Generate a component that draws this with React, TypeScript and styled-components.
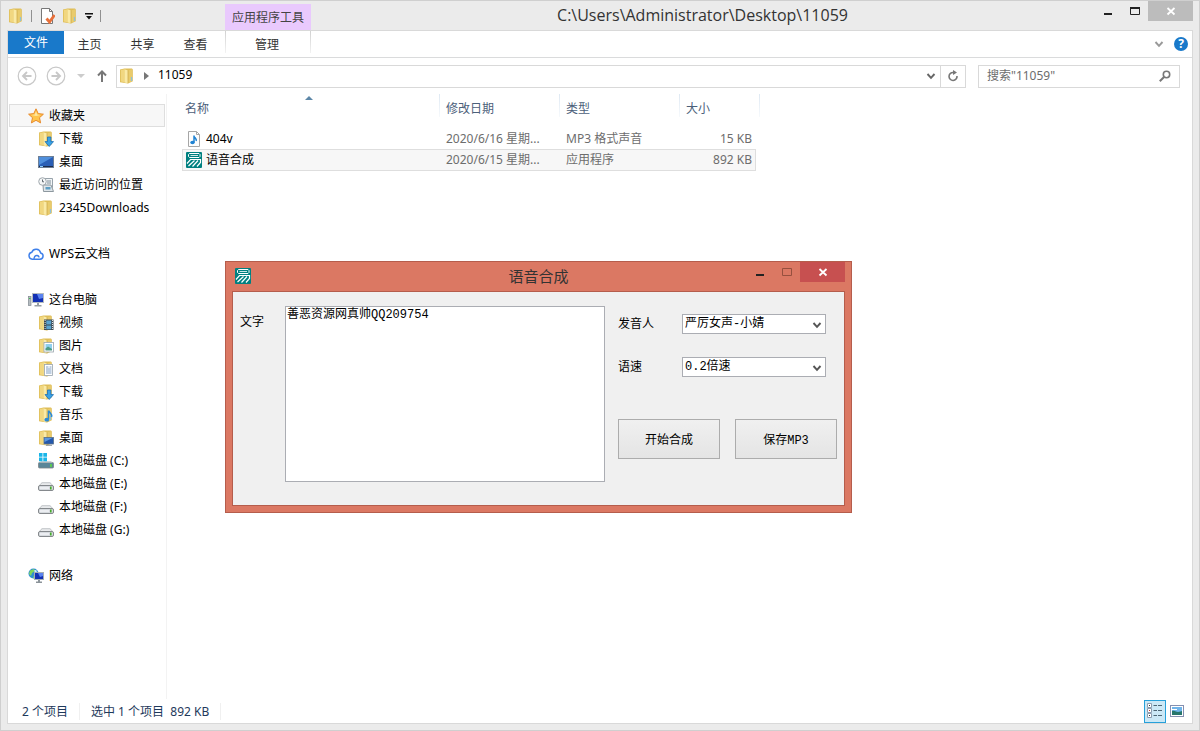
import React from 'react';
import styled, { createGlobalStyle, css } from 'styled-components';

const GlobalStyle = createGlobalStyle`
  *, *::before, *::after { box-sizing: border-box; }
  body { margin: 0; background: #ebebeb; }
  body, button, input, select, textarea {
    font-family: "Noto Sans", "Noto Sans CJK SC", sans-serif;
    font-size: 12px;
    line-height: 16px;
    color: #000;
  }
  button { padding: 0; border: 0; background: none; }
  a { color: inherit; text-decoration: none; }
  svg { display: block; flex: none; }
`;

/* ---------- icons ---------- */

type IconProps = { size?: number; children?: React.ReactNode };

const Svg = ({ size = 16, children }: IconProps) => (
  <svg width={size} height={size} viewBox="0 0 16 16" fill="none" aria-hidden="true">
    {children}
  </svg>
);

const FolderShape = () => (
  <>
    <path d="M1 1.500 5.500.5h7.500l.8 1v11.800L9 15.600 1 14.200Z" fill="#dfbe58" />
    <path d="M1.800 2 5.500 1.200v13L1.800 13.600Z" fill="#f1d780" />
    <path d="M5.500 1.200 9 2.400v12.800l-3.500-.8Z" fill="#faeaa6" />
    <path d="M9 2.400 13 1.300v11.800l-4 2Z" fill="#e9cb6c" />
    <path d="M9 2.400v12.800" stroke="#c9a343" strokeWidth=".7" />
    <path d="M12.500 9v4" stroke="#8cc1de" strokeWidth="1.200" />
  </>
);

const FolderIcon = () => <Svg><FolderShape /></Svg>;

const DownloadIcon = () => (
  <Svg>
    <FolderShape />
    <path d="M9.500 6h3.400v4.600h2.600L11.200 15.500 7 10.600h2.500Z" fill="#39a2e6" stroke="#1b6fb4" strokeWidth=".8" />
  </Svg>
);

const MonitorIcon = () => (
  <Svg>
    <rect x=".5" y="2.500" width="15" height="11" fill="#2a5fb6" stroke="#6d7f96" />
    <path d="M1 3h14L1 11Z" fill="#4f8fdc" />
    <path d="M1 12.500h14" stroke="#1d2c4c" />
    <path d="M2 12.500h3" stroke="#8fd0ff" />
  </Svg>
);

const RecentIcon = () => (
  <Svg>
    <path d="M7 1.500h7.500v9H7Z" fill="#f2f5f7" stroke="#98a3ab" />
    <path d="M9 4h4M9 6h4" stroke="#7c8b96" />
    <path d="M5 8h8l2.500 6.500h-10Z" fill="#dfe5e9" stroke="#8d989f" />
    <path d="M7.500 10h5v2.500h-5Z" fill="#5e9fc4" />
    <circle cx="4.500" cy="4.500" r="3.800" fill="#f4f6f7" stroke="#a0a8ad" />
    <path d="M4.500 2.500v2.300H6" stroke="#5c666d" />
  </Svg>
);

const StarIcon = () => (
  <Svg>
    <path d="m8 .8 2.200 4.800 5.200.6-3.900 3.500 1.100 5.200L8 12.300l-4.600 2.600 1.100-5.200L.6 6.200l5.200-.6Z" fill="#ffc54b" stroke="#e88a2c" />
    <path d="m8 3.200 1.200 3.300 3.300.5-4.500 1-4.500-1 3.300-.5Z" fill="#ffe7a0" />
  </Svg>
);

const CloudIcon = () => (
  <Svg>
    <path d="M4.200 13.200h7.800a3.200 3.200 0 0 0 .6-6.300A4.600 4.600 0 0 0 3.800 6.300 3.500 3.500 0 0 0 4.200 13.200Z" stroke="#3f80ea" strokeWidth="1.500" />
    <path d="M6 13c.2-2.500 1.200-3.600 3-3.500 1.500.1 2 1 2 2" stroke="#3f80ea" strokeWidth="1.300" />
  </Svg>
);

const ComputerIcon = () => (
  <Svg>
    <rect x=".5" y="4.500" width="2.500" height="9" fill="#b5bcc1" stroke="#7e878d" strokeWidth=".7" />
    <path d="M1 6.500h1.500" stroke="#3fc04d" />
    <rect x="4.500" y="1.500" width="11" height="9" fill="#1230b4" stroke="#b4bbc0" />
    <path d="M9 2h6v4l-4 1Z" fill="#5a83f0" />
    <path d="M9 11h2v2H9ZM6.500 13h7v1.500h-7Z" fill="#989fa4" />
  </Svg>
);

const VideoIcon = () => (
  <Svg>
    <FolderShape />
    <rect x="6" y="4.500" width="9.500" height="10.500" fill="#3d4850" />
    <path d="M8.300 5.500h5v4h-5ZM8.300 10.500h5v3.700h-5Z" fill="#5ba3d0" />
    <path d="M7.100 5v9.500M14.500 5v9.500" stroke="#dfe4e8" strokeDasharray="1 1" />
  </Svg>
);

const PictureIcon = () => (
  <Svg>
    <FolderShape />
    <rect x="6" y="4.500" width="9.500" height="9.500" fill="#fff" stroke="#9aa5ad" strokeWidth=".8" />
    <path d="M7.500 6h6.500v6H7.500Z" fill="#8fd0ee" />
    <path d="M7.500 10.500 10 8.500l4 2.500v1.500H7.500Z" fill="#4f9c86" />
  </Svg>
);

const DocumentIcon = () => (
  <Svg>
    <FolderShape />
    <rect x="6.500" y="3.500" width="8" height="11" fill="#fff" stroke="#9aa5ad" strokeWidth=".8" />
    <path d="M8 6h2.500M11.500 6H13.500M8 8h5.500M8 10h5.500M8 12h5.500" stroke="#7f9ec4" />
  </Svg>
);

const MusicFolderIcon = () => (
  <Svg>
    <FolderShape />
    <path d="M10.500 4v8" stroke="#2b8ad6" strokeWidth="1.500" />
    <path d="M10.500 3.500c.5 2.200 4 3 3 6.500" stroke="#2b8ad6" strokeWidth="1.600" />
    <ellipse cx="8.800" cy="12.700" rx="2.400" ry="1.900" fill="#2b8ad6" />
  </Svg>
);

const DesktopFolderIcon = () => (
  <Svg>
    <FolderShape />
    <rect x="6" y="7.500" width="9.500" height="6.500" fill="#2458ac" stroke="#5c7288" strokeWidth=".8" />
    <path d="M6.500 8h8l-8 4Z" fill="#5c98df" />
    <path d="M8 15.300h6" stroke="#8c949a" />
  </Svg>
);

const DriveIcon = () => (
  <Svg>
    <path d="m3 7.500 1-.8h8l1 .8 2.300 3H.7Z" fill="#e9ebed" stroke="#b3b7ba" strokeWidth=".8" />
    <rect x=".5" y="9.500" width="15" height="5" rx="1.500" fill="#d6dade" stroke="#85898d" />
    <path d="M2 11h9v2H2Z" fill="#eceef2" />
    <path d="M12.800 10.500v3" stroke="#46ad2c" strokeWidth="1.600" />
  </Svg>
);

const SystemDriveIcon = () => (
  <Svg>
    <rect x=".5" y="9.500" width="15" height="5.500" rx="1" fill="#5a8698" stroke="#7d8387" strokeWidth=".8" />
    <path d="m2 9 1-1h10l1.500 1.500H1Z" fill="#ccd2d5" />
    <path d="M13 11v3" stroke="#5ee03a" strokeWidth="1.500" />
    <path d="M1 0h3.500v3.700H1ZM5.300 0H9v3.700H5.300ZM1 4.500h3.500v3.700H1ZM5.300 4.500H9v3.700H5.300Z" fill="#19b5e8" />
  </Svg>
);

const NetworkIcon = () => (
  <Svg>
    <circle cx="5.500" cy="5.500" r="5" fill="#2f8fd4" />
    <path d="M2 2.500 6 1l1 2-3 2-1 3-2-2ZM6 7l3 1-2 2.300H5Z" fill="#7fd65c" />
    <path d="M6 2.500 8 2l1 1.500-2 1Z" fill="#d6f0fb" />
    <rect x="6.500" y="4.500" width="9" height="7" fill="#1230b4" stroke="#a5adb4" />
    <path d="M10 5h5v3l-3 1Z" fill="#5a83f0" />
    <path d="M10 12h2v1.500h-2ZM8 13.500h6V15H8Z" fill="#8b9399" />
  </Svg>
);

const MusicFileIcon = () => (
  <Svg>
    <path d="M2.500.5h8l3 3v12h-11Z" fill="#fdfdfd" stroke="#a6a6a6" />
    <path d="M10.500.5v3h3" stroke="#a6a6a6" />
    <path d="M8 4.500v7M8 5c.3 2 3 2.200 2.200 5" stroke="#1f82d2" strokeWidth="1.500" />
    <ellipse cx="6.500" cy="11.500" rx="2.200" ry="1.800" fill="#1f82d2" />
  </Svg>
);

const ELangIcon = () => (
  <Svg>
    <rect width="16" height="16" rx="1" fill="#008080" />
    <path d="M2.500 2.500 3.500 1.500h9.500l1 1v2l-1 1H3.500l-1-1Z" stroke="#fff" />
    <path d="M4.500 3.500H12" stroke="#fff" strokeWidth=".8" />
    <path d="M1 11.500 4.500 7.500h10v3L11 14.500M8.500 8.500 2.500 14M12 8.500 6.500 14.500" stroke="#fff" strokeWidth="1.200" />
  </Svg>
);

const CheckedPageIcon = () => (
  <Svg>
    <path d="M2.500.5h8l3 3v12h-11Z" fill="#fff" stroke="#777" />
    <path d="M10.500.5v3h3" stroke="#777" />
    <path d="m7.500 10.500 3 3.500L15.500 7" stroke="#e8703a" strokeWidth="2.800" />
  </Svg>
);

const DetailsIcon = () => (
  <Svg>
    <path d="M.5.5h4v4h-4ZM.5 5.500h4v4h-4ZM.5 10.500h4v4h-4Z" fill="#fff" stroke="#8d9db0" />
    <path d="M2 2.500h1M2 12.500h1" stroke="#333" />
    <path d="M2 7.500h1" stroke="#d0392b" />
    <path d="M6.500 2.500H10M11 2.500h4M6.500 7.500H10M11 7.500h4M6.500 12.500H10M11 12.500h4" stroke="#4d6675" />
  </Svg>
);

const LargeIconsIcon = () => (
  <Svg>
    <rect x="1.500" y="2.500" width="13" height="11" fill="#fff" stroke="#8590b0" />
    <path d="M3 4h10v8H3Z" fill="#6fb4ea" />
    <path d="M3 8c3-1 4 1 6 1s3-1 4-1v4H3Z" fill="#27766c" />
    <path d="M3 6.500h5" stroke="#fff" />
  </Svg>
);

const Chevron = ({ color = '#555' }: { color?: string }) => (
  <svg width="10" height="10" viewBox="0 0 10 10" fill="none" aria-hidden="true">
    <path d="m1.500 3 3.500 3.800L8.500 3" stroke={color} strokeWidth="1.900" />
  </svg>
);

const NavArrow = ({ flipped = false }: { flipped?: boolean }) => (
  <svg width="20" height="20" viewBox="0 0 20 20" fill="none" stroke="#c8c8c8" aria-hidden="true">
    <circle cx="10" cy="10" r="8.800" strokeWidth="1.200" />
    <path d={flipped ? 'M5.500 10h8M10 6l4 4-4 4' : 'M14.500 10h-8M10 6l-4 4 4 4'} strokeWidth="1.900" />
  </svg>
);

/* ---------- explorer window ---------- */

const Window = styled.div`
  position: relative;
  display: flex;
  flex-direction: column;
  min-height: 100vh;
  border: 1px solid #cfcfcf;
  background: #ebebeb;
`;

const TitleBar = styled.header`
  display: flex;
  height: 29px;
  padding: 0 6px 0 7px;
`;

const QuickAccess = styled.div`
  display: flex;
  align-items: center;
  gap: 7px;
  width: 217px;
  flex: none;
`;

const QuickSeparator = styled.span`
  width: 1px;
  height: 12px;
  background: #909090;
`;

const ContextHeader = styled.div`
  align-self: flex-end;
  flex: none;
  width: 86px;
  height: 26px;
  background: #e9c9fd;
  color: #444;
  line-height: 28px;
  text-align: center;
`;

const WindowTitle = styled.h1`
  flex: 1;
  margin: 0;
  font-family: "Open Sans", "Noto Sans", sans-serif;
  font-size: 16px;
  font-weight: 400;
  line-height: 28px;
  text-align: center;
  color: #333;
`;

const WindowControls = styled.div`
  display: flex;
  align-items: flex-start;
  flex: none;
`;

const WindowButton = styled.button<{ $close?: string }>`
  display: grid;
  place-items: center;
  width: ${p => (p.$close ? 45 : 27)}px;
  height: 20px;
  background: ${p => p.$close ?? 'transparent'};
`;

const MinimizeGlyph = () => (
  <svg width="10" height="10" viewBox="0 0 10 10" aria-hidden="true"><path d="M1 7h8v2H1Z" fill="#222" /></svg>
);
const MaximizeGlyph = ({ color = '#222' }: { color?: string }) => (
  <svg width="10" height="10" viewBox="0 0 10 10" fill="none" aria-hidden="true">
    <path d="M.5 1.500h9v7h-9Z" stroke={color} />
    {color === '#222' && <path d="M0 2h10" stroke={color} strokeWidth="2" />}
  </svg>
);
const CloseGlyph = () => (
  <svg width="10" height="10" viewBox="0 0 10 10" aria-hidden="true"><path d="m1.500 2 7 6.500M8.500 2l-7 6.500" stroke="#fff" strokeWidth="1.800" /></svg>
);

const Frame = styled.div`
  flex: 1;
  display: flex;
  flex-direction: column;
  margin: 0 6px 6px;
  border: 1px solid #d9d9d9;
  background: #fff;
`;

const Ribbon = styled.nav`
  display: flex;
  height: 27px;
  border-bottom: 1px solid #dadbdc;
`;

const FileTab = styled.button`
  width: 56px;
  height: 23px;
  background: #1979ca;
  color: #fff;
`;

const Tabs = styled.div`
  display: flex;
  width: 161px;
  flex: none;
`;

const Tab = styled.button<{ $contextual?: boolean }>`
  flex: none;
  width: 53px;
  height: 26px;
  padding: 2px 2px 0 0;
  color: #333;
  ${p => p.$contextual && css`
    width: 86px;
    height: 22px;
    padding-top: 6px;
    border: 1px solid;
    border-width: 0 1px;
    border-image: linear-gradient(#d0d0d0, #f4f4f4) 1;
  `}
`;

const RibbonTools = styled.div`
  display: flex;
  align-items: center;
  gap: 10px;
  margin-left: auto;
  padding-right: 4px;
`;

const HelpButton = styled.button`
  width: 14px;
  height: 14px;
  border-radius: 50%;
  background: #1979ca;
  color: #fff;
  font-weight: 700;
  line-height: 14px;
`;

const AddressRow = styled.div`
  display: flex;
  align-items: center;
  height: 36px;
  padding: 0 12px 0 9px;
`;

const NavButtons = styled.div`
  display: flex;
  align-items: center;
  gap: 9px;
  width: 99px;
  flex: none;
`;

const IconButton = styled.button`
  display: grid;
  place-items: center;
  flex: none;
`;

const AddressBox = styled.div`
  display: flex;
  align-items: center;
  flex: 1;
  height: 23px;
  padding-left: 2px;
  border: 1px solid #d9d9d9;
`;

const Crumb = styled.a`
  flex: 1;
  margin-left: 9px;
  padding-bottom: 2px;
`;

const CrumbArrow = styled.span`
  margin-left: 9px;
  border: solid transparent;
  border-width: 4px 0 4px 5px;
  border-left-color: #777;
`;

const AddressAction = styled(IconButton)<{ $divided?: boolean }>`
  width: ${p => (p.$divided ? 25 : 18)}px;
  height: 21px;
  border-left: ${p => (p.$divided ? '1px solid #d9d9d9' : '0')};
`;

const SearchBox = styled.div`
  display: flex;
  align-items: center;
  width: 202px;
  height: 23px;
  margin-left: 12px;
  padding: 0 8px;
  border: 1px solid #d9d9d9;
`;

const SearchInput = styled.input`
  flex: 1;
  min-width: 0;
  padding: 0;
  border: 0;
  outline: 0;
  background: none;
  &::placeholder { color: #6d6d6d; opacity: 1; }
`;

const Body = styled.div`
  flex: 1;
  display: flex;
`;

const Sidebar = styled.nav`
  display: flex;
  flex-direction: column;
  gap: 23px;
  width: 159px;
  flex: none;
  padding: 10px 1px 0 1px;
  border-right: 1px solid #f3f3f3;
`;

const TreeGroup = styled.ul`
  margin: 0;
  padding: 0;
  list-style: none;
`;

const TreeLink = styled.a<{ $child?: boolean; $selected?: boolean }>`
  display: flex;
  align-items: center;
  gap: 5px;
  height: 23px;
  padding-left: ${p => (p.$child ? 28 : 18)}px;
  border: 1px solid ${p => (p.$selected ? '#dedede' : 'transparent')};
  background: ${p => (p.$selected ? '#f7f7f7' : 'transparent')};
  white-space: nowrap;
`;

const Files = styled.main`
  flex: 1;
  padding-left: 15px;
`;

const FileTable = styled.table`
  width: 578px;
  table-layout: fixed;
  border-collapse: separate;
  border-spacing: 0;
`;

const headRule = 'linear-gradient(#dfe9f3, #f6f9fc) right top / 1px 23px no-repeat';

const HeadCell = styled.th<{ $width: number; $first?: boolean; $last?: boolean }>`
  position: relative;
  width: ${p => p.$width}px;
  height: 34px;
  padding: 7px 0 0 ${p => (p.$first ? 3 : 6)}px;
  font-weight: 400;
  text-align: left;
  vertical-align: top;
  color: #4c607a;
  background: ${p => (p.$last ? 'none' : headRule)};
`;

const HeadSpacer = styled.td`
  width: 4px;
  padding: 0;
  background: ${headRule};
`;

const SortMark = styled.span`
  position: absolute;
  top: 2px;
  left: 50%;
  margin-left: -6px;
  border: solid transparent;
  border-width: 0 4px 4px;
  border-bottom-color: #5d87a8;
`;

const FileRow = styled.tr<{ $selected?: boolean }>`
  & > td {
    height: ${p => (p.$selected ? 22 : 21)}px;
    padding: 0 0 0 6px;
    color: #6d6d6d;
    white-space: nowrap;
    border: 0 solid #dedede;
  }
  & > td:nth-child(4) { padding: 0 4px 0 0; text-align: right; }
  & > td:last-child { padding: 0; }
  ${p => p.$selected && css`
    & > td:not(:last-child) { border-width: 1px 0; background: #f7f7f7; }
    & > td:nth-child(4) { border-right-width: 1px; padding-right: 3px; }
    & > td:first-child { box-shadow: inset 1px 0 #dedede; }
  `}
`;

const FileName = styled.a`
  display: flex;
  align-items: center;
  gap: 4px;
  margin-left: -2px;
  color: #000;
`;

const StatusBar = styled.footer`
  display: flex;
  align-items: center;
  height: 24px;
  padding: 0 4px 0 14px;
  color: #1e395b;
`;

const StatusItem = styled.span`
  margin-right: 11px;
  padding: 1px 11px 0 0;
  border-right: 1px solid #f0f0f0;
  white-space: pre;
`;

const ViewButtons = styled.div`
  display: flex;
  align-items: center;
  margin-left: auto;
`;

const ViewButton = styled(IconButton)<{ $active?: boolean }>`
  width: 22px;
  height: 23px;
  border: 1px solid ${p => (p.$active ? '#26a0da' : 'transparent')};
  background: ${p => (p.$active ? '#cbe8f6' : 'transparent')};
`;

/* ---------- speech dialog ---------- */

const Dialog = styled.section`
  position: absolute;
  left: 224px;
  top: 260px;
  width: 627px;
  padding: 0 6px 6px;
  border: 1px solid #b55d4c;
  background: #db7863;
`;

const DialogBar = styled.header`
  display: grid;
  grid-template-columns: 1fr auto 1fr;
  align-items: center;
  height: 29px;
`;

const DialogIcon = styled.span`
  padding: 0 0 1px 3px;
`;

const DialogTitle = styled.h2`
  margin: 0;
  font-size: 15px;
  font-weight: 400;
  line-height: 18px;
  padding-bottom: 2px;
  color: #333;
`;

const DialogControls = styled(WindowControls)`
  justify-self: end;
  align-self: start;
`;

const Form = styled.form`
  display: flex;
  gap: 13px;
  padding: 14px 7px 23px;
  border: 1px solid #b55d4c;
  background: #f0f0f0;

  &, textarea, select, button {
    font-family: "Liberation Mono", "Noto Sans CJK SC", monospace;
  }
`;

const TextField = styled.label`
  display: flex;
  line-height: 34px;
`;

const FieldLabel = styled.span<{ $width: number }>`
  width: ${p => p.$width}px;
  flex: none;
`;

const TextArea = styled.textarea`
  width: 320px;
  height: 176px;
  padding: 0 1px;
  border: 1px solid #abadb3;
  outline: 0;
  resize: none;
  background: #fff;
`;

const Options = styled.div`
  flex: 1;
  padding-top: 8px;
`;

const SelectField = styled.label`
  display: flex;
  height: 20px;
  margin-bottom: 23px;
  line-height: 22px;
`;

const SelectWrap = styled.span`
  position: relative;
  flex: none;

  svg {
    position: absolute;
    right: 4px;
    top: 6px;
    pointer-events: none;
  }
`;

const Select = styled.select`
  display: block;
  appearance: none;
  width: 144px;
  height: 20px;
  padding: 0 18px 0 2px;
  border: 1px solid #abadb3;
  border-radius: 0;
  outline: 0;
  background: #fff;
`;

const Actions = styled.div`
  display: flex;
  gap: 15px;
  margin-top: 42px;
`;

const ActionButton = styled.button`
  width: 102px;
  height: 40px;
  padding-top: 4px;
  border: 1px solid #acacac;
  background: linear-gradient(#f0f0f0, #e4e4e4);
`;

/* ---------- data ---------- */

type TreeNode = { label: string; Icon: () => React.JSX.Element };

const tree: { root: TreeNode; selected?: boolean; items: TreeNode[] }[] = [
  {
    root: { label: '收藏夹', Icon: StarIcon },
    selected: true,
    items: [
      { label: '下载', Icon: DownloadIcon },
      { label: '桌面', Icon: MonitorIcon },
      { label: '最近访问的位置', Icon: RecentIcon },
      { label: '2345Downloads', Icon: FolderIcon },
    ],
  },
  { root: { label: 'WPS云文档', Icon: CloudIcon }, items: [] },
  {
    root: { label: '这台电脑', Icon: ComputerIcon },
    items: [
      { label: '视频', Icon: VideoIcon },
      { label: '图片', Icon: PictureIcon },
      { label: '文档', Icon: DocumentIcon },
      { label: '下载', Icon: DownloadIcon },
      { label: '音乐', Icon: MusicFolderIcon },
      { label: '桌面', Icon: DesktopFolderIcon },
      { label: '本地磁盘 (C:)', Icon: SystemDriveIcon },
      { label: '本地磁盘 (E:)', Icon: DriveIcon },
      { label: '本地磁盘 (F:)', Icon: DriveIcon },
      { label: '本地磁盘 (G:)', Icon: DriveIcon },
    ],
  },
  { root: { label: '网络', Icon: NetworkIcon }, items: [] },
];

const files = [
  { name: '404v', date: '2020/6/16 星期...', type: 'MP3 格式声音', size: '15 KB', Icon: MusicFileIcon },
  { name: '语音合成', date: '2020/6/15 星期...', type: '应用程序', size: '892 KB', Icon: ELangIcon, selected: true },
];

export default function App() {
  return (
    <>
      <GlobalStyle />
      <Window>
        <TitleBar>
          <QuickAccess>
            <FolderIcon />
            <QuickSeparator />
            <IconButton aria-label="属性"><CheckedPageIcon /></IconButton>
            <IconButton aria-label="新建文件夹"><FolderIcon /></IconButton>
            <IconButton aria-label="自定义快速访问工具栏">
              <svg width="8" height="8" viewBox="0 0 8 8" aria-hidden="true"><path d="M0 1h8v1.500H0ZM1 4h6L4 7.500Z" fill="#111" /></svg>
            </IconButton>
            <QuickSeparator />
          </QuickAccess>
          <ContextHeader>应用程序工具</ContextHeader>
          <WindowTitle>C:\Users\Administrator\Desktop\11059</WindowTitle>
          <WindowControls>
            <WindowButton aria-label="最小化"><MinimizeGlyph /></WindowButton>
            <WindowButton aria-label="最大化"><MaximizeGlyph /></WindowButton>
            <WindowButton $close="#bcbcbc" aria-label="关闭"><CloseGlyph /></WindowButton>
          </WindowControls>
        </TitleBar>

        <Frame>
          <Ribbon>
            <FileTab>文件</FileTab>
            <Tabs>
              <Tab>主页</Tab>
              <Tab>共享</Tab>
              <Tab>查看</Tab>
            </Tabs>
            <Tab $contextual>管理</Tab>
            <RibbonTools>
              <IconButton aria-label="展开功能区"><Chevron color="#999" /></IconButton>
              <HelpButton aria-label="帮助">?</HelpButton>
            </RibbonTools>
          </Ribbon>

          <AddressRow>
            <NavButtons>
              <IconButton aria-label="后退"><NavArrow /></IconButton>
              <IconButton aria-label="前进"><NavArrow flipped /></IconButton>
              <IconButton aria-label="最近浏览的位置">
                <svg width="12" height="8" viewBox="0 0 12 8" aria-hidden="true"><path d="M2 2h8L6 6Z" fill="#ccc" /></svg>
              </IconButton>
              <IconButton aria-label="上移">
                <svg width="12" height="14" viewBox="0 0 12 14" fill="none" aria-hidden="true"><path d="M6 13V3M2 6.500l4-4 4 4" stroke="#777" strokeWidth="2" /></svg>
              </IconButton>
            </NavButtons>
            <AddressBox>
              <FolderIcon />
              <CrumbArrow />
              <Crumb href="#11059">11059</Crumb>
              <AddressAction aria-label="以前的位置"><Chevron color="#666" /></AddressAction>
              <AddressAction $divided aria-label="刷新">
                <svg width="12" height="12" viewBox="0 0 12 12" fill="none" aria-hidden="true">
                  <path d="M6.500 2.500A4 4 0 1 0 10 6" stroke="#777" strokeWidth="1.600" />
                  <path d="M6 0v5l4-2.500Z" fill="#777" />
                </svg>
              </AddressAction>
            </AddressBox>
            <SearchBox>
              <SearchInput type="search" aria-label="搜索" placeholder={'搜索"11059"'} />
              <IconButton aria-label="开始搜索">
                <svg width="12" height="12" viewBox="0 0 12 12" fill="none" stroke="#777" aria-hidden="true">
                  <circle cx="7.500" cy="4.500" r="3.200" strokeWidth="1.600" />
                  <path d="M5 7 .8 11.200" strokeWidth="2" />
                </svg>
              </IconButton>
            </SearchBox>
          </AddressRow>

          <Body>
            <Sidebar>
              {tree.map(({ root, selected, items }) => (
                <TreeGroup key={root.label}>
                  <li><TreeLink href="#" $selected={selected}><root.Icon />{root.label}</TreeLink></li>
                  {items.map(({ label, Icon }) => (
                    <li key={label}><TreeLink href="#" $child><Icon />{label}</TreeLink></li>
                  ))}
                </TreeGroup>
              ))}
            </Sidebar>

            <Files>
              <FileTable>
                <thead>
                  <tr>
                    <HeadCell $width={258} $first>名称<SortMark /></HeadCell>
                    <HeadCell $width={120}>修改日期</HeadCell>
                    <HeadCell $width={120}>类型</HeadCell>
                    <HeadCell $width={76} $last>大小</HeadCell>
                    <HeadSpacer />
                  </tr>
                </thead>
                <tbody>
                  {files.map(({ name, date, type, size, Icon, selected }) => (
                    <FileRow key={name} $selected={selected}>
                      <td><FileName href="#"><Icon />{name}</FileName></td>
                      <td>{date}</td>
                      <td>{type}</td>
                      <td>{size}</td>
                      <td />
                    </FileRow>
                  ))}
                </tbody>
              </FileTable>
            </Files>
          </Body>

          <StatusBar>
            <StatusItem>2 个项目</StatusItem>
            <StatusItem>选中 1 个项目  892 KB</StatusItem>
            <ViewButtons>
              <ViewButton $active aria-label="详细信息"><DetailsIcon /></ViewButton>
              <ViewButton aria-label="大图标"><LargeIconsIcon /></ViewButton>
            </ViewButtons>
          </StatusBar>
        </Frame>

        <Dialog role="dialog" aria-labelledby="dialog-title">
          <DialogBar>
            <DialogIcon><ELangIcon /></DialogIcon>
            <DialogTitle id="dialog-title">语音合成</DialogTitle>
            <DialogControls>
              <WindowButton aria-label="最小化"><MinimizeGlyph /></WindowButton>
              <WindowButton aria-label="最大化" disabled><MaximizeGlyph color="#96503f" /></WindowButton>
              <WindowButton $close="#c75050" aria-label="关闭"><CloseGlyph /></WindowButton>
            </DialogControls>
          </DialogBar>
          <Form onSubmit={e => e.preventDefault()}>
            <TextField>
              <FieldLabel $width={45}>文字</FieldLabel>
              <TextArea defaultValue="善恶资源网真帅QQ209754" spellCheck={false} />
            </TextField>
            <Options>
              <SelectField>
                <FieldLabel $width={64}>发音人</FieldLabel>
                <SelectWrap>
                  <Select defaultValue="严厉女声-小婧"><option>严厉女声-小婧</option></Select>
                  <Chevron />
                </SelectWrap>
              </SelectField>
              <SelectField>
                <FieldLabel $width={64}>语速</FieldLabel>
                <SelectWrap>
                  <Select defaultValue="0.2倍速"><option>0.2倍速</option></Select>
                  <Chevron />
                </SelectWrap>
              </SelectField>
              <Actions>
                <ActionButton type="submit">开始合成</ActionButton>
                <ActionButton type="button">保存MP3</ActionButton>
              </Actions>
            </Options>
          </Form>
        </Dialog>
      </Window>
    </>
  );
}
